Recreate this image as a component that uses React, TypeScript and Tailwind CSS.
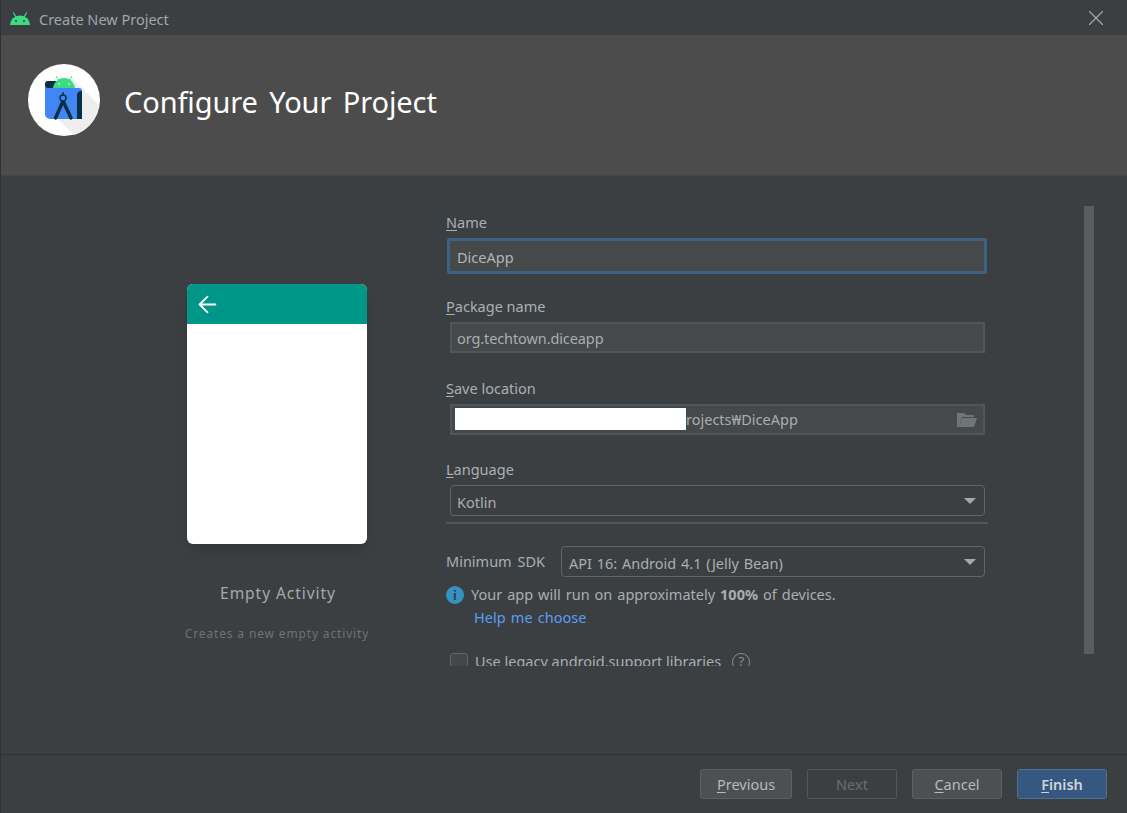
import { ArrowLeft, X } from 'lucide-react';

function AndroidHead({ className }: { className: string }) {
  return (
    <svg viewBox="2 0 20 13" className={className}>
      <path d="M5.5 1 8 5M18.5 1 16 5" stroke="#3ddc84" strokeWidth="1.2" strokeLinecap="round" />
      <path d="M2 13a10 9.5 0 0 1 20 0z" fill="#3ddc84" />
      <circle cx="8" cy="9" r="1" fill="#3c3f41" />
      <circle cx="16" cy="9" r="1" fill="#3c3f41" />
    </svg>
  );
}

function StudioLogo() {
  return (
    <svg viewBox="0 0 72 72" className="w-[72px] h-[72px]">
      <circle cx="36" cy="36" r="36" fill="#ffffff" />
      <path d="M44 14 71 41a36 36 0 0 1-25 30L18 44z" fill="#eeeeee" />
      <path d="M20 17h12v9H17v-6q0-3 3-3z" fill="#073042" />
      <path d="M25 25a11 11 0 0 1 22 0z" fill="#3ddc84" />
      <path d="M28 12l2.5 4M44 12l-2.5 4" stroke="#3ddc84" strokeWidth="1" />
      <circle cx="31" cy="20" r=".8" fill="#fff" />
      <circle cx="41" cy="20" r=".8" fill="#fff" />
      <path d="M17 20c0 3 1 4 4 4h30q3 0 3 3v28H22a5 5 0 0 1-5-5z" fill="#4285f4" />
      <path d="M49 31q0-4 5-4v28h-5z" fill="#073042" />
      <path d="M35 37 27.500 54M35 37l8 17" stroke="#073042" strokeWidth="3.4" strokeLinecap="round" fill="none" />
      <circle cx="35" cy="34" r="3" fill="#4285f4" stroke="#073042" strokeWidth="1.4" />
      <path d="M35 28v3" stroke="#073042" strokeWidth="1.4" />
    </svg>
  );
}

function Label({ mnemonic, rest }: { mnemonic: string; rest: string }) {
  return (
    <div className="h-5 leading-5 text-[14.5px] text-[#a9b0b5]">
      <span className="underline underline-offset-2">{mnemonic}</span>
      {rest}
    </div>
  );
}

function Button({ mnemonic, rest, kind, width }: { mnemonic?: string; rest: string; kind?: 'disabled' | 'primary'; width: string }) {
  let cls = 'border-[#5e6060] bg-[#4c5052] text-[#b4babd]';
  if (kind === 'disabled') cls = 'border-[#555859] bg-[#3c3f41] text-[#6a6d6e]';
  if (kind === 'primary') cls = 'border-[#4c708c] bg-[#365880] text-[#cfd5da] font-semibold';
  return (
    <div className={`h-[30px] rounded-[3px] border flex items-center justify-center pt-[2px] text-[14.5px] ${width} ${cls}`}>
      <span>
        {mnemonic && <span className="underline underline-offset-2">{mnemonic}</span>}
        {rest}
      </span>
    </div>
  );
}

export default function App() {
  return (
    <div className="w-[1127px] h-[813px] flex flex-col overflow-hidden bg-[#3c3f41] border-l border-[#2f3133] font-['Noto_Sans','Noto_Sans_CJK_KR',sans-serif]">
      <div className="h-[35px] flex items-center pt-[4px] pl-[9px] pr-[18px] shrink-0">
        <AndroidHead className="w-5 h-[13px] -mt-[3px]" />
        <span className="ml-[9px] text-[14.5px] text-[#a0a6aa]">Create New Project</span>
        <X className="ml-auto w-[26px] h-[26px] -mt-[3px] text-[#a7abae]" strokeWidth={1} />
      </div>

      <div className="h-[141px] shrink-0 bg-[#4c4c4c] border-b border-[#444648] flex items-center pl-[27px] pb-[11px]">
        <StudioLogo />
        <h1 className="ml-[24px] mt-[4px] text-[29px] tracking-[-0.1px] text-white [word-spacing:4px]">Configure Your Project</h1>
      </div>

      <div className="flex-1 flex min-h-0">
        <div className="w-[445px] pl-[106px] shrink-0 flex flex-col">
          <div className="w-[340px] flex flex-col items-center pt-[108px]">
            <div className="w-[180px] h-[260px] rounded-[6px] bg-white overflow-hidden shadow-lg">
              <div className="h-10 bg-[#009688] flex items-center pl-[7px]">
                <ArrowLeft className="w-[27px] h-[27px] text-white" strokeWidth={1.6} />
              </div>
            </div>
            <div className="mt-[38px] ml-[2px] text-[15.5px] tracking-[0.95px] text-[#a4a9ac]">Empty Activity</div>
            <div className="mt-[20px] text-[12px] tracking-[0.85px] text-[#6f7274]">Creates a new empty activity</div>
          </div>
        </div>

        <div className="w-[542px] h-[490px] overflow-hidden shrink-0">
          <div className="pt-[36px]">
            <Label mnemonic="N" rest="ame" />
            <div className="mt-[6px] h-[36px] w-[540px] ml-px border-[3px] border-[#3d6185] rounded-[2px] bg-[#45494a] flex items-center pl-[7px] pt-[3px] text-[14.5px] text-[#b1b6b9]">
              DiceApp
            </div>
            <div className="mt-[22px]"><Label mnemonic="P" rest="ackage name" /></div>
            <div className="mt-[6px] ml-[4px] h-[31px] w-[535px] border-2 border-[#525557] bg-[#45494a] flex items-center pl-[5px] pt-[3px] text-[14.5px] tracking-[-0.1px] text-[#a9aeb1]">
              org.techtown.diceapp
            </div>
            <div className="mt-[25px]"><Label mnemonic="S" rest="ave location" /></div>
            <div className="mt-[6px] ml-[4px] h-[31px] w-[535px] border-2 border-[#525557] bg-[#45494a] flex items-center pl-[3px] pr-[6px] text-[14.5px] text-[#a9aeb1]">
              <div className="w-[231px] h-[22px] -mt-[2px] bg-white shrink-0" />
              <span>rojects₩DiceApp</span>
              <svg viewBox="0 0 20 15" className="ml-auto w-[20px] h-[15px]">
                <path d="M0 1h7l2 2h8v2H5L2 15H0z" fill="#6e7679" />
                <path d="M5 6h15l-3 9H2z" fill="#6e7679" />
              </svg>
            </div>
            <div className="mt-[24px]"><Label mnemonic="L" rest="anguage" /></div>
            <div className="mt-[6px] ml-[4px] h-[31px] w-[535px] border border-[#646464] rounded-[4px] flex items-center pl-[6px] pr-[8px] text-[14.5px] text-[#a9aeb1]">
              <span className="pt-[4px]">Kotlin</span>
              <span className="ml-auto w-0 h-0 border-x-[6px] border-x-transparent border-t-[6px] border-t-[#a4a9ac]" />
            </div>
            <div className="mt-[6px] h-[2px] w-[542px] bg-[#535556]" />
            <div className="mt-[22px] flex items-center">
              <div className="w-[115px] text-[14.5px] [word-spacing:2px] text-[#a9aeb1]">Minimum SDK</div>
              <div className="h-[31px] w-[424px] border border-[#646464] rounded-[4px] flex items-center pl-[7px] pr-[8px] text-[14.5px] [word-spacing:1px] text-[#a9aeb1]">
                <span className="pt-[4px]">API 16: Android 4.1 (Jelly Bean)</span>
                <span className="ml-auto w-0 h-0 border-x-[6px] border-x-transparent border-t-[6px] border-t-[#a4a9ac]" />
              </div>
            </div>
            <div className="mt-[8px] h-5 flex items-center text-[14.5px] [word-spacing:1.2px] text-[#a9aeb1]">
              <span className="w-[18px] h-[18px] rounded-full bg-[#3592c4] flex items-center justify-center text-[13px] font-bold text-[#3c3f41] leading-none">i</span>
              <span className="ml-[7px]">Your app will run on approximately <b className="font-bold">100%</b> of devices.</span>
            </div>
            <div className="mt-[2px] ml-[28px] h-5 leading-5 text-[14.5px] [word-spacing:1.5px] text-[#589df6]">Help me choose</div>
            <div className="mt-[24px] ml-[4px] flex items-center text-[14.5px] text-[#a9aeb1]">
              <span className="w-[18px] h-[18px] rounded-[3px] border border-[#626465] bg-[#43474a]" />
              <span className="ml-[7px]">Use legacy android.support libraries</span>
              <span className="ml-[11px] w-[18px] h-[18px] rounded-full border border-[#8a8d8f] flex items-center justify-center text-[13px] text-[#8a8d8f]">?</span>
            </div>
          </div>
        </div>

        <div className="ml-[96px] mt-[30px] w-[10px] h-[448px] bg-[#5a5c5e] shrink-0" />
      </div>

      <div className="h-[59px] shrink-0 border-t border-[#323232] flex items-start justify-end gap-[15px] pt-[14px] pr-[20px]">
        <Button mnemonic="P" rest="revious" width="w-[92px]" />
        <Button rest="Next" kind="disabled" width="w-[90px]" />
        <Button mnemonic="C" rest="ancel" width="w-[90px]" />
        <Button mnemonic="F" rest="inish" kind="primary" width="w-[90px]" />
      </div>
    </div>
  );
}
